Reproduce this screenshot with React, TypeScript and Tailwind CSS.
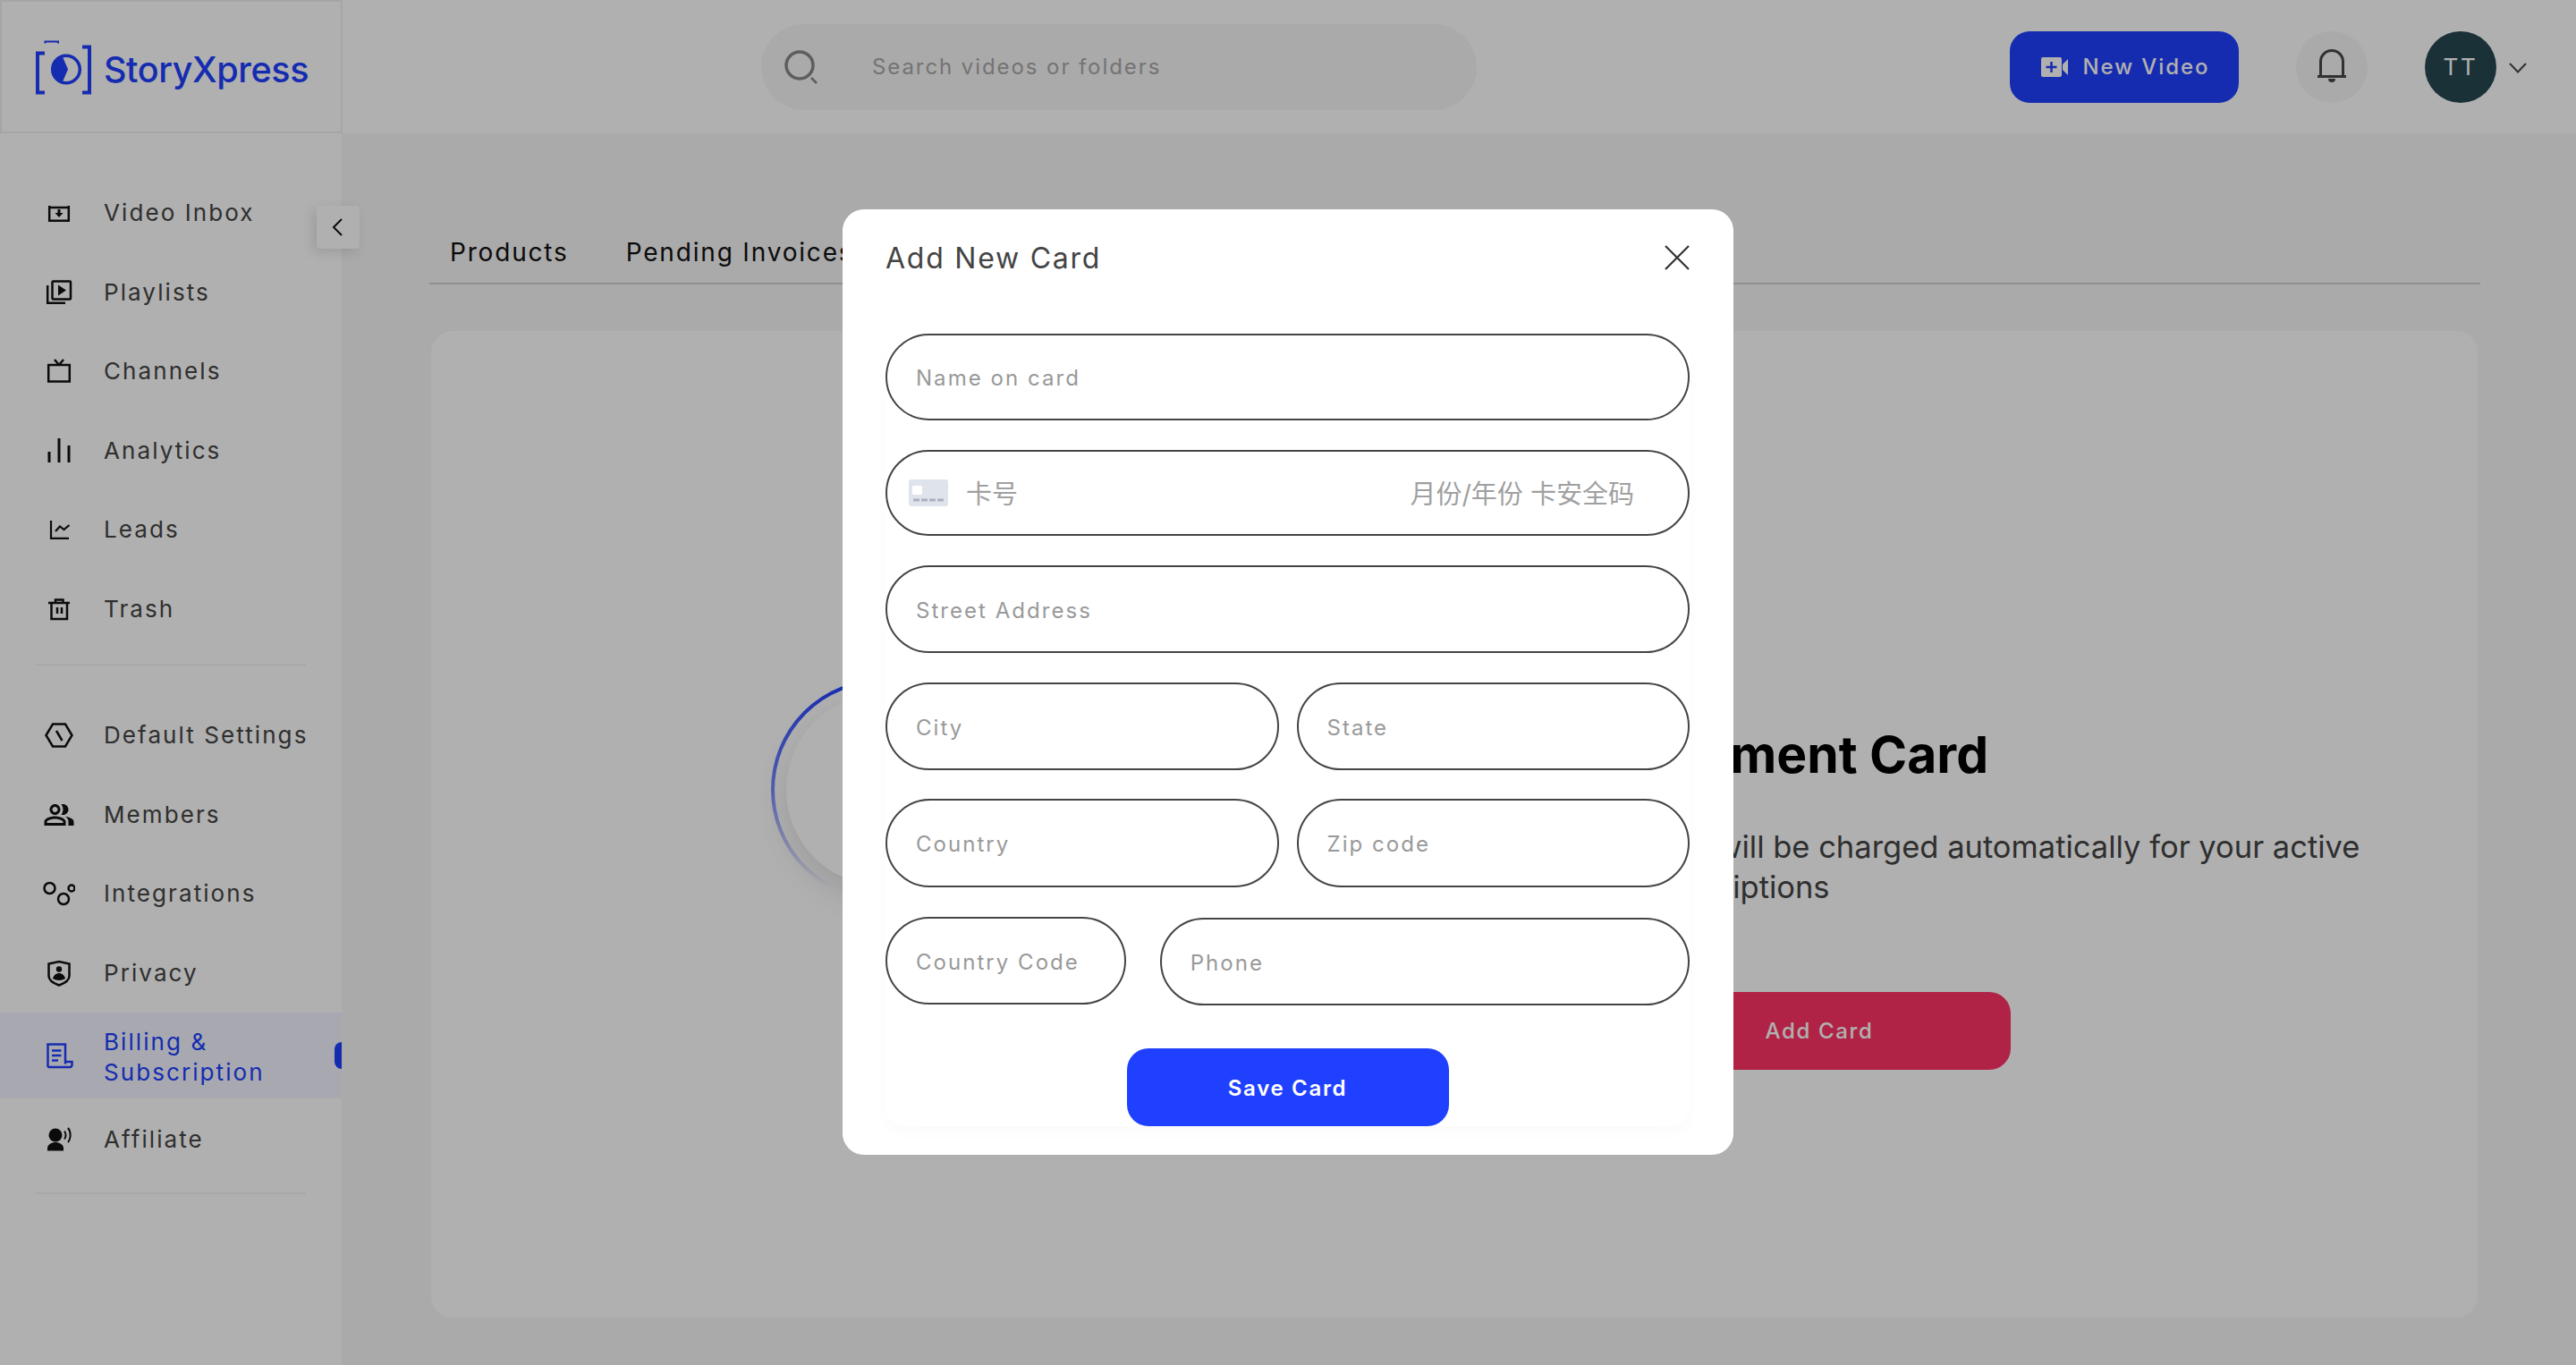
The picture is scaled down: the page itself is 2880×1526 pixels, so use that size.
import React from "react";
import { MdOutlinePeopleAlt } from "react-icons/md";

const I = ({ children, c = "#111" }: { children: React.ReactNode; c?: string }) => (
  <svg width="36" height="36" viewBox="0 0 36 36" fill="none" stroke={c} strokeWidth="2.5">
    {children}
  </svg>
);

const icons: Record<string, React.ReactNode> = {
  inbox: (
    <I>
      <path d="M7.2 10v16.8h21.6V10M7 12h22" />
      <path d="M16.500 14h3v4h3L18 23l-4.500-5h3z" fill="#111" stroke="none" />
    </I>
  ),
  playlists: (
    <I>
      <rect x="10.500" y="5.500" width="20.500" height="20" rx="1" />
      <path d="M5.200 10v19.800H25" />
      <path d="M17 9.500l9 6-9 6z" fill="#111" stroke="none" />
    </I>
  ),
  channels: (
    <I>
      <rect x="6.200" y="11" width="23.600" height="18.500" />
      <path d="M18 11l-5-6M18 11l5-6" />
    </I>
  ),
  analytics: (
    <I>
      <path d="M7 19v12M18 4v27M29 12v19" strokeWidth="3" />
    </I>
  ),
  leads: (
    <I>
      <path d="M9 8v19.800h20" strokeWidth="2.200" />
      <path d="M14 20l5-5.500 4.500 3.500 6-5" strokeWidth="2.200" />
    </I>
  ),
  trash: (
    <I>
      <path d="M6 11h24M14 11V7.500h8.500V11M9.500 11v18h17.500V11" />
      <path d="M16 16v7M21 16v7" />
    </I>
  ),
  settings: (
    <I>
      <path d="M3.500 18l7.500-12.500h14L32.500 18 25 30.500H11z" />
      <path d="M15 13l6.500 11" />
    </I>
  ),
  members: <MdOutlinePeopleAlt size={36} color="#111" />,
  integrations: (
    <I>
      <circle cx="7.500" cy="12" r="6" />
      <circle cx="23" cy="24" r="6" />
      <circle cx="32" cy="12" r="3.500" />
    </I>
  ),
  privacy: (
    <I>
      <path d="M6.500 7.500L18 5l11.500 2.500V21c0 4-4.500 8-11.500 10.500C11 29 6.500 25 6.500 21z" />
      <circle cx="18" cy="13.500" r="3.200" fill="#111" stroke="none" />
      <path d="M11 24c1-4 4-6 7-6s6 2 7 6c-4 2.500-10 2.500-14 0z" fill="#111" stroke="none" />
    </I>
  ),
  billing: (
    <I c="#2040ff">
      <path d="M25 27.500V5.500H5.500v24a1.500 1.500 0 0 0 1.500 1.500h23a2.500 2.500 0 0 0 2.500-2.500V25H25" />
      <path d="M10 12.500h10.500M10 18h10.500M10 23.500h7" />
    </I>
  ),
  affiliate: (
    <svg width="36" height="36" viewBox="0 0 36 36" fill="none">
      <circle cx="14" cy="13" r="7.500" fill="#111" />
      <path d="M5 30.500v-3c0-4 5-6.500 9-6.500s9 2.500 9 6.500v3z" fill="#111" />
      <path d="M24 8.500c2 2.500 2 6.500 0 9M28 5c3.500 4 3.500 12 0 16" stroke="#111" strokeWidth="2" />
    </svg>
  ),
};

const Row = ({ icon, label, active }: { icon: string; label: React.ReactNode; active?: boolean }) => (
  <div
    className={
      active
        ? "relative flex h-[96px] items-center gap-[24px] bg-[#f3f5ff] pl-[40px] text-[#2040ff]"
        : "flex h-[88.500px] items-center gap-[24px] pl-[40px] text-[#444444]"
    }
  >
    <span className="flex w-[52px] shrink-0 justify-center">{icons[icon]}</span>
    <span className={active ? "pt-[3px] text-[26px] leading-[34px] tracking-[0.08em]" : "text-[26px] leading-[34px] tracking-[0.08em]"}>{label}</span>
    {active && <span className="absolute right-0 top-[33px] h-[30px] w-[8px] rounded-l-full rounded-r-[2px] bg-[#2040ff]" />}
  </div>
);

const Field = ({ placeholder, className }: { placeholder: string; className: string }) => (
  <input
    placeholder={placeholder}
    className={
      "rounded-full border-2 border-[#444444] bg-white pl-[32px] pr-[20px] pt-[2px] text-[24px] tracking-[0.085em] outline-none placeholder:text-[#999999] " +
      className
    }
  />
);

export default function App() {
  return (
    <div className="relative flex h-[1526px] w-full flex-col overflow-hidden bg-[#f6f6f6] font-['Inter','Noto_Sans_CJK_SC',sans-serif]">
      <header className="flex h-[149px] shrink-0 items-center bg-white">
        <div className="flex h-full w-[383px] shrink-0 items-center gap-[12px] border-2 border-[#efefef] pl-[38px]">
          <svg width="64" height="64" viewBox="0 0 64 64" fill="none" className="shrink-0">
            <path d="M10 16.500H2V60.500H10" stroke="#2040ff" strokeWidth="4" />
            <path d="M52 9.500H60V60.500H52" stroke="#2040ff" strokeWidth="4" />
            <path d="M10.500 5.500V3.500H25V5.500" stroke="#2040ff" strokeWidth="2" />
            <circle cx="34" cy="34.500" r="15.300" stroke="#2040ff" strokeWidth="3.500" />
            <path d="M30 20.500A14.500 14.500 0 0 0 30 48.500L36 34.500Z" fill="#2040ff" />
          </svg>
          <span className="mt-[8px] text-[39.500px] font-medium tracking-[-0.01em] text-[#2040ff]">StoryXpress</span>
        </div>

        <div className="ml-[468px] flex h-[96px] w-[800px] shrink-0 items-center rounded-full bg-[#f6f6f6] pl-[26px]">
          <svg width="38" height="38" viewBox="0 0 38 38" fill="none" stroke="#888888" className="shrink-0">
            <circle cx="17" cy="17" r="15" strokeWidth="3.500" />
            <path d="M30 31l6 6" strokeWidth="2.500" />
          </svg>
          <span className="ml-[60px] text-[24px] tracking-[0.08em] text-[#a8a8a8]">Search videos or folders</span>
        </div>

        <button className="ml-[596px] flex h-[80px] w-[256px] shrink-0 items-center justify-center gap-[17px] rounded-[22px] bg-[#2040ff] pl-[2px] text-[24px] font-medium tracking-[0.08em] text-white">
          <svg width="30" height="22" viewBox="0 0 30 22">
            <path d="M2 0h19a2 2 0 0 1 2 2v18a2 2 0 0 1-2 2H2a2 2 0 0 1-2-2V2a2 2 0 0 1 2-2zM24 8l6-6v18l-6-6z" fill="#fff" />
            <path d="M11.500 5v12M5.500 11h12" stroke="#2040ff" strokeWidth="2.500" />
          </svg>
          New Video
        </button>

        <div className="ml-[64px] flex h-[80px] w-[80px] shrink-0 items-center justify-center rounded-full bg-[#f6f6f6]">
          <svg width="32" height="40" viewBox="0 0 32 40" fill="none" stroke="#484848" className="-mt-[3px]">
            <path d="M3.500 32V16a12.500 12.500 0 0 1 25 0v16" strokeWidth="3" />
            <path d="M0 32.500h32" strokeWidth="3" />
            <path d="M12 35h8a4 4 0 0 1-8 0z" fill="#484848" stroke="none" />
          </svg>
        </div>

        <div className="ml-[64px] flex h-[80px] w-[80px] shrink-0 items-center justify-center rounded-full bg-[#264852] text-[26px] tracking-[0.1em] text-white">
          TT
        </div>
        <svg width="20" height="12" viewBox="0 0 20 12" fill="none" stroke="#484848" strokeWidth="2" className="ml-[14px] mt-[3px] shrink-0">
          <path d="M1 1l9 9.500L19 1" />
        </svg>
      </header>

      <div className="flex min-h-0 flex-1">
        <aside className="relative w-[382px] shrink-0 bg-white pt-[45px]">
          <Row icon="inbox" label="Video Inbox" />
          <Row icon="playlists" label="Playlists" />
          <Row icon="channels" label="Channels" />
          <Row icon="analytics" label="Analytics" />
          <Row icon="leads" label="Leads" />
          <Row icon="trash" label="Trash" />
          <div className="mx-[40px] mb-[34px] mt-[17px] h-[2px] bg-[#f3f3f3]" />
          <Row icon="settings" label="Default Settings" />
          <Row icon="members" label="Members" />
          <Row icon="integrations" label="Integrations" />
          <Row icon="privacy" label="Privacy" />
          <Row icon="billing" active label={<>Billing &<br />Subscription</>} />
          <div className="pt-[2px]">
            <Row icon="affiliate" label="Affiliate" />
          </div>
          <div className="mx-[40px] mt-[14px] h-[2px] bg-[#f3f3f3]" />
          <button className="absolute left-[354px] top-[81px] flex h-[48px] w-[48px] items-center justify-center rounded-[4px] bg-white shadow-[-4px_4px_14px_rgba(0,0,0,0.12)]">
            <svg width="14" height="20" viewBox="0 0 14 20" fill="none" stroke="#111" strokeWidth="2">
              <path d="M11 1L2 10l9 9" />
            </svg>
          </button>
        </aside>

        <main className="min-w-0 flex-1 pl-[98px] pr-[107px]">
          <div className="flex h-[169px] items-end gap-[64px] border-b-2 border-[#d0d0d0] pb-[14px] pl-[23px] text-[28px] tracking-[0.065em] text-[#111]">
            <span className="leading-[40px]">Products</span>
            <span className="leading-[40px]">Pending Invoices</span>
          </div>
          <section className="ml-[2px] mr-[3px] mt-[52px] flex h-[1103px] rounded-[24px] bg-white pl-[380px] pt-[389px]">
            <div className="relative h-[248px] w-[248px] shrink-0">
              <svg width="248" height="248" viewBox="0 0 248 248" fill="none" className="absolute inset-0">
                <defs>
                  <linearGradient id="arc" x1="0" y1="0" x2="0" y2="1">
                    <stop offset="0" stopColor="#2040ff" />
                    <stop offset="0.5" stopColor="#2040ff" stopOpacity="0.6" />
                    <stop offset="0.95" stopColor="#2040ff" stopOpacity="0" />
                  </linearGradient>
                </defs>
                <circle cx="124" cy="124" r="122" stroke="url(#arc)" strokeWidth="4" />
              </svg>
              <div className="absolute inset-[17px] rounded-full bg-white shadow-[0_14px_36px_rgba(0,0,0,0.12)]" />
            </div>
            <div className="ml-[595px] flex w-[956px] shrink-0 flex-col items-start pt-[51px]">
              <h2 className="whitespace-nowrap text-[57px] font-bold leading-[68px] text-black">Add Payment Card</h2>
              <p className="ml-[47px] mt-[46px] whitespace-nowrap text-[34.500px] leading-[45px] text-[#444444]">
                Your card will be charged automatically for your active
                <br />
                <span className="pl-[74px]">subscriptions</span>
              </p>
              <button className="ml-[115px] mt-[95px] flex h-[87px] w-[428px] items-center justify-center rounded-[24px] bg-[#ff3366] text-[24px] font-medium tracking-[0.07em] text-white">
                Add Card
              </button>
            </div>
          </section>
        </main>
      </div>

      <div className="absolute inset-0 flex items-center justify-center bg-black/[0.31]">
        <div className="mb-[1px] flex h-[1057px] w-[996px] flex-col rounded-[24px] bg-white pl-[47px] pr-[48px]">
          <div className="flex h-[139px] shrink-0 items-start justify-between pl-[1px] pr-[1px] pt-[33px]">
            <h3 className="text-[32px] leading-[44px] tracking-[0.055em] text-[#444444]">Add New Card</h3>
            <svg width="28" height="28" viewBox="0 0 28 28" fill="none" stroke="#333" strokeWidth="2.200" className="mt-[7px]">
              <path d="M1 1l26 26M27 1L1 27" />
            </svg>
          </div>
          <div className="flex h-[886px] flex-col rounded-[24px] bg-white px-[1px] shadow-[0_8px_16px_rgba(0,0,0,0.02)]">
            <Field placeholder="Name on card" className="h-[97px] w-full shrink-0" />
            <div className="mt-[33px] flex h-[96px] shrink-0 items-center rounded-full border-2 border-[#444444] pl-[24px] pr-[60px] text-[29px] text-[#a0a0a0]">
              <svg width="44" height="30" viewBox="0 0 44 30" className="shrink-0">
                <rect width="44" height="30" rx="3" fill="#dfe3ec" />
                <rect x="4" y="7" width="11" height="10" rx="1" fill="#fff" />
                <path d="M5 23h7M14 23h7M23 23h7M32 23h7" stroke="#aab0c0" strokeWidth="3" />
              </svg>
              <span className="ml-[20px] pt-[4px]">卡号</span>
              <span className="ml-auto pt-[4px]">月份/年份 卡安全码</span>
            </div>
            <Field placeholder="Street Address" className="mt-[33px] h-[98px] w-full shrink-0" />
            <div className="mt-[33px] flex shrink-0 gap-[20px]">
              <Field placeholder="City" className="h-[98px] w-[440px] min-w-0" />
              <Field placeholder="State" className="h-[98px] w-[440px] min-w-0" />
            </div>
            <div className="mt-[32px] flex shrink-0 gap-[20px]">
              <Field placeholder="Country" className="h-[99px] w-[440px] min-w-0" />
              <Field placeholder="Zip code" className="h-[99px] w-[440px] min-w-0" />
            </div>
            <div className="mt-[33px] flex shrink-0 items-start gap-[38px]">
              <Field placeholder="Country Code" className="h-[98px] w-[269px] min-w-0" />
              <Field placeholder="Phone" className="mt-[1px] h-[98px] w-[593px] min-w-0" />
            </div>
            <button className="mx-auto mt-[48px] h-[87px] w-[360px] shrink-0 rounded-[24px] bg-[#2040ff] pt-[2px] text-[24px] font-semibold tracking-[0.07em] text-white">
              Save Card
            </button>
          </div>
        </div>
      </div>
    </div>
  );
}
